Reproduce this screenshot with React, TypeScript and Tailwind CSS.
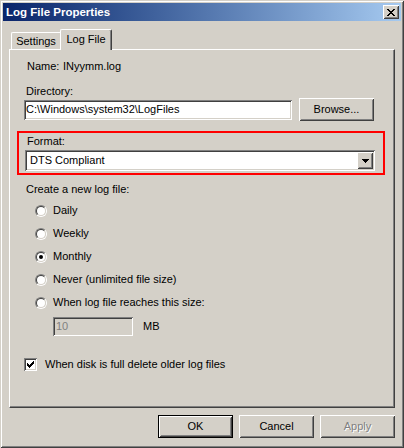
const raised =
  "shadow-[inset_1px_1px_#ffffff,inset_-1px_-1px_#404040,inset_2px_2px_#d4d0c8,inset_-2px_-2px_#808080]";
const sunken =
  "shadow-[inset_1px_1px_#808080,inset_-1px_-1px_#ffffff,inset_2px_2px_#404040,inset_-2px_-2px_#d4d0c8]";

function CloseGlyph() {
  return (
    <svg width="8" height="7" viewBox="0 0 8 7" shapeRendering="crispEdges">
      <path
        fill="#000"
        d="M0 0h2v1h-2z M6 0h2v1h-2z M1 1h2v1h-2z M5 1h2v1h-2z M2 2h4v1h-4z M3 3h2v1h-2z M2 4h4v1h-4z M1 5h2v1h-2z M5 5h2v1h-2z M0 6h2v1h-2z M6 6h2v1h-2z"
      />
    </svg>
  );
}

function CheckGlyph() {
  return (
    <svg width="7" height="7" viewBox="0 0 7 7" shapeRendering="crispEdges">
      <path
        fill="#000"
        d="M6 0h1v1h-1z M5 1h2v1h-2z M0 2h1v1h-1z M4 2h3v1h-3z M0 3h2v1h-2z M3 3h3v1h-3z M0 4h5v1h-5z M1 5h3v1h-3z M2 6h1v1h-1z"
      />
    </svg>
  );
}

function Radio({ label, checked }: { label: string; checked?: boolean }) {
  return (
    <div className="flex h-[23px] items-center gap-[6px] pl-[11px]">
      <div className="w-[12px] h-[12px] rounded-full border border-t-[#808080] border-l-[#808080] border-r-white border-b-white">
        <div className="w-full h-full rounded-full border border-t-[#404040] border-l-[#404040] border-r-[#d4d0c8] border-b-[#d4d0c8] bg-white flex items-center justify-center">
          {checked && <div className="w-[4px] h-[4px] rounded-full bg-black" />}
        </div>
      </div>
      <span>{label}</span>
    </div>
  );
}

function Button({
  label,
  isDefault,
  disabled,
}: {
  label: string;
  isDefault?: boolean;
  disabled?: boolean;
}) {
  if (isDefault) {
    return (
      <div className="w-[75px] h-[23px] border border-black">
        <div className={`w-full h-full flex items-center justify-center ${raised}`}>{label}</div>
      </div>
    );
  }
  return (
    <div
      className={`w-[75px] h-[23px] flex items-center justify-center ${raised} ${
        disabled ? "text-[#808080] [text-shadow:1px_1px_0_#ffffff]" : ""
      }`}
    >
      {label}
    </div>
  );
}

export default function App() {
  return (
    <div className="w-[404px] h-[448px] bg-[#d4d0c8] p-[3px] flex flex-col shadow-[inset_1px_1px_#d4d0c8,inset_-1px_-1px_#404040,inset_2px_2px_#ffffff,inset_-2px_-2px_#808080] font-['Liberation_Sans',Arial,sans-serif] text-[11px] leading-[13px] text-black">
      {/* title bar */}
      <div className="h-[18px] flex items-center justify-between pl-[3px] pr-[2px] bg-linear-to-r from-[#0a246a] to-[#a6caf0]">
        <span className="text-white font-bold text-[11.5px]">Log File Properties</span>
        <div className={`w-[16px] h-[14px] bg-[#d4d0c8] flex items-center justify-center ${raised}`}>
          <CloseGlyph />
        </div>
      </div>

      {/* tabs */}
      <div className="relative z-10 flex items-end h-[29px] -mb-px mx-[6px] pl-[2px]">
        <div className="w-[49px] h-[17px] mb-px border-l border-t border-white rounded-tl-[2px] flex items-center justify-center">
          Settings
        </div>
        <div className="w-[52px] h-[21px] bg-[#d4d0c8] border-l border-t border-white border-r border-r-[#404040] rounded-t-[2px] shadow-[inset_-1px_0_#808080] flex items-start justify-center pt-[3px]">
          Log File
        </div>
      </div>

      {/* panel */}
      <div className="mx-[6px] h-[359px] border border-t-white border-l-white border-r-[#404040] border-b-[#404040] shadow-[inset_-1px_-1px_#808080] pl-[14px] pr-[20px] pt-[10px] flex flex-col">
        <div className="flex h-[13px] ml-[3px]">
          <span className="w-[36px]">Name:</span>
          <span>INyymm.log</span>
        </div>

        <div className="mt-[12px] ml-[2px] h-[13px]">Directory:</div>
        <div className="h-[23px] flex items-center justify-between">
          <div className={`w-[268px] h-[20px] bg-white flex items-center pl-[2px] ${sunken}`}>
            C:\Windows\system32\LogFiles
          </div>
          <Button label="Browse..." />
        </div>

        <div className="mt-[10px] -ml-[7px] -mr-[11px] border-2 border-[#ff0000] pt-[2px] pb-[2px] pl-[6px] pr-[8px]">
          <div className="ml-[2px] h-[13px]">Format:</div>
          <div className={`mt-[2px] h-[21px] bg-white flex items-stretch p-[2px] ${sunken}`}>
            <div className="flex-1 flex items-center pl-[3px]">DTS Compliant</div>
            <div className={`w-[16px] bg-[#d4d0c8] flex items-center justify-center ${raised}`}>
              <svg width="7" height="4" viewBox="0 0 7 4" shapeRendering="crispEdges">
                <path fill="#000" d="M0 0h7v1h-7z M1 1h5v1h-5z M2 2h3v1h-3z M3 3h1v1h-1z" />
              </svg>
            </div>
          </div>
        </div>

        <div className="mt-[8px] ml-[2px] h-[13px]">Create a new log file:</div>
        <div className="mt-[3px] flex flex-col">
          <Radio label="Daily" />
          <Radio label="Weekly" />
          <Radio label="Monthly" checked />
          <Radio label="Never (unlimited file size)" />
          <Radio label="When log file reaches this size:" />
        </div>

        <div className="mt-[3px] ml-[29px] flex items-center">
          <div className={`w-[80px] h-[19px] bg-[#d4d0c8] text-[#808080] flex items-center pl-[3px] ${sunken}`}>
            10
          </div>
          <span className="ml-[10px]">MB</span>
        </div>

        <div className="mt-[22px] h-[13px] flex items-center gap-[8px]">
          <div className={`w-[13px] h-[13px] bg-white flex items-center justify-center ${sunken}`}>
            <CheckGlyph />
          </div>
          <span>When disk is full delete older log files</span>
        </div>
      </div>

      {/* buttons */}
      <div className="mt-[7px] pr-[6px] flex justify-end gap-[6px]">
        <Button label="OK" isDefault />
        <Button label="Cancel" />
        <Button label="Apply" disabled />
      </div>
    </div>
  );
}
